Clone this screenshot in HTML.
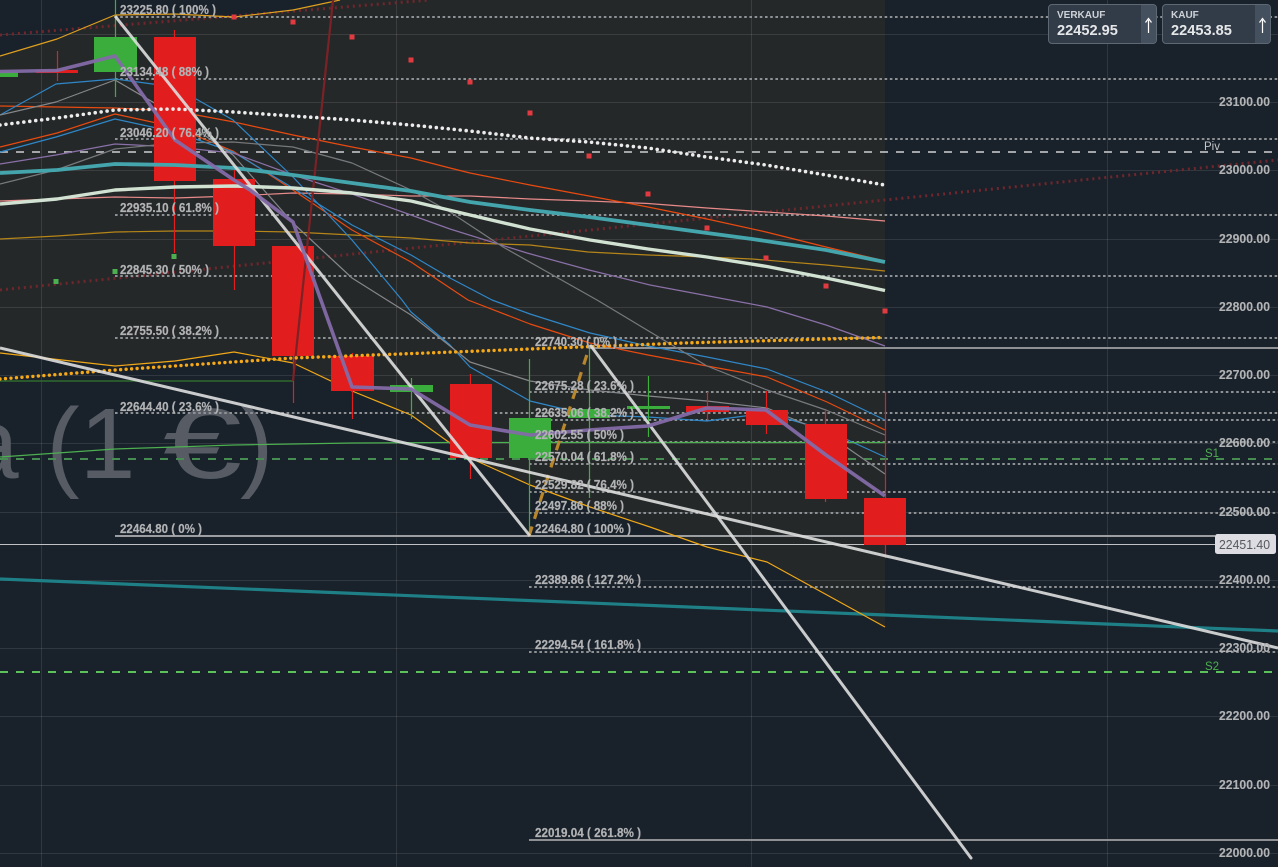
<!DOCTYPE html>
<html><head><meta charset="utf-8"><title>Chart</title>
<style>
html,body{margin:0;padding:0;background:#19212a;width:1278px;height:867px;overflow:hidden}
svg{display:block;position:absolute;left:0;top:0}
svg.main{filter:blur(.35px)}
text{font-family:"Liberation Sans",sans-serif}
.l{font-size:12.5px;font-weight:700;fill:#b2b3b5;stroke:#b2b3b5;stroke-width:.2}
.a{font-size:12.5px;font-weight:700;fill:#b2b3b5;stroke:#b2b3b5;stroke-width:.1}
.d{fill:none;stroke:#8e9194;stroke-width:2;stroke-dasharray:2.6 2.6}
.t{fill:none;stroke-width:1.2;stroke-linejoin:round}
.box{position:absolute;top:4px;width:107px;height:38px;background:#323c49;border:1px solid #5d6875;border-radius:4px;overflow:hidden;font-family:"Liberation Sans",sans-serif}
.box .s{position:absolute;right:0;top:0;width:15px;height:100%;background:#45505e}
.box .n{position:absolute;left:8px;top:5px;font-size:10px;font-weight:700;color:#cfd2d6;line-height:11px}
.box .v{position:absolute;left:8px;top:18px;font-size:14.6px;font-weight:700;color:#e6e7e9;line-height:17px}
.box svg{left:auto;right:0;top:0}
</style></head><body>
<svg class="main" width="1278" height="867" viewBox="0 0 1278 867" xmlns="http://www.w3.org/2000/svg">
<rect x="-5" y="-5" width="1288" height="877" fill="#19212a"/>
<polygon fill="#252829" points="0,56 57,39 115,15 175,14 234,17 293,10 340,0 885,0 885,627 826,595 767,562 707,547 650,527 590,507 530,485 470,458 450,443 411,415 352,391 293,363 234,352 175,361 115,366 0,353"/>
<g stroke="#fff" stroke-opacity=".1" stroke-width="1" fill="none">
<path d="M0 34.5H1278M0 102.5H1278M0 170.5H1278M0 239.5H1278M0 307.5H1278M0 375.5H1278M0 443.5H1278M0 512.5H1278M0 580.5H1278M0 648.5H1278M0 716.5H1278M0 785.5H1278M0 853.5H1278"/>
<path d="M41.5 0V867M396.5 0V867M751.5 0V867M1107.5 0V867"/>
</g>
<g font-size="100" fill="#575c64">
<text x="-37" y="478">a (1</text>
<text x="163" y="478" textLength="79" lengthAdjust="spacingAndGlyphs">€</text>
<text x="240" y="478">)</text>
</g>
<g fill="none" stroke="#6f262c" stroke-width="3" stroke-dasharray="2 4">
<path d="M0 35L430 0"/>
<path d="M0 290L1278 160"/>
</g>
<path class="d" d="M115 17H1278M115 79H1278M115 139H1278M115 215H1278M115 276H1278M115 338H1278M115 413H1278"/>
<path class="d" d="M529 392H1278M529 420H1278M529 442H1278M529 464H1278M529 492H1278M529 513H1278M529 587H1278M529 652H1278"/>
<path fill="none" stroke="#8e9094" stroke-width="2" d="M590 348H1278M529 840H1278"/>
<path fill="none" stroke="#9c9ea2" stroke-width="2" d="M115 536H1215"/>
<path fill="none" stroke="#a3a5a8" stroke-width="2" stroke-dasharray="8 8" d="M0 152H1278"/>
<path fill="none" stroke="#478c50" stroke-width="2" stroke-dasharray="8 8" d="M0 459H1278"/>
<path fill="none" stroke="#5cc05c" stroke-width="2" stroke-dasharray="8 8" d="M0 672H1278"/>
<path fill="none" stroke="#c0c2c4" stroke-width="1" d="M0 544.5H1215"/>
<path fill="none" stroke="#1e7f86" stroke-width="3.2" d="M0 579L1278 631"/>
<polyline class="t" stroke="#e0a020" points="0,56 57,39 115,15 175,14 234,17 293,10 340,0"/>
<polyline class="t" stroke="#f0a818" points="0,353 115,366 175,361 234,352 293,363 352,391 411,415 450,443 470,458 530,485 590,507 650,527 707,547 767,562 827,595 885,627"/>
<polyline class="t" stroke="#b58518" points="0,239 57,236 115,232 175,231 234,231 293,232 352,235 411,238 470,243 530,245 588,252 648,255 707,257 752,259 826,265 885,271"/>
<polyline class="t" stroke="#e88a8a" stroke-width="1.4" points="0,201 115,197 175,198 234,196 293,193 352,194 411,196 470,196 530,199 589,201 648,203.5 707,208 752,211 826,216 885,221"/>
<polyline class="t" stroke="#e84a10" points="0,106 57,107 115,108 175,111 234,122 293,135 352,147 411,158 450,168 470,173 530,185 589,196 648,207 707,219 766,232 826,247 885,261"/>
<polyline class="t" stroke="#e84a10" points="0,147 57,133 115,114 175,127 233,151 293,190 352,230 411,262 468,300 530,324 590,343 648,355 707,366 767,377 827,402 885,430"/>
<polyline class="t" stroke="#2f87c8" points="0,115 56,84 115,79 175,87 233,120 293,177 352,240 402,300 411,312 450,345 470,367 530,401 568,410 590,415 648,417 707,421 767,413 826,430 885,457"/>
<polyline class="t" stroke="#2f87c8" points="0,152 56,137 115,119 175,132 233,152 293,188 352,225 411,255 450,278 492,300 530,314 590,333 648,346 707,357 767,369 827,392 885,420"/>
<polyline class="t" stroke="#8a70a8" points="0,164 56,155 115,144 175,147 233,153 293,175 352,194 411,215 450,229 527,253 589,270 650,285 730,300 767,307 826,325 885,346"/>
<polyline class="t" stroke="#85878a" points="0,115 56,102 115,80 175,115 233,155 293,223 352,278 387,300 411,315 450,346 470,362 530,381 590,390 648,396 707,401 767,408 826,433 885,474"/>
<polyline class="t" stroke="#77797c" points="0,184 56,170 115,149 175,143 233,142 293,147 352,163 411,190 450,212 503,247 597,300 707,366 767,390 826,410 885,435"/>
<path fill="none" stroke="#2d6a2d" stroke-width="1.6" d="M0 381H293"/>
<polyline class="t" stroke="#4caf50" stroke-width="1.3" points="0,457 115,449 175,447 234,445 293,444 352,443 450,442.5 885,442.5"/>
<g stroke-width="1.2" fill="none">
<path stroke="#3fae3f" d="M115.5 0V97M411.5 378V419M529.5 359V536M589.5 347V498M648.5 376V437"/>
<path stroke="#e31e1e" d="M57.5 51V81M174.5 30V253M234.5 170V290M293.5 340V403M352.5 353V419M470.5 374V479M707.5 392V420M766.5 391V434M825.5 410V502M885.5 392V558"/>
</g>
<g fill="#3aad3c">
<rect x="0" y="72" width="18" height="5"/>
<rect x="94" y="37" width="43" height="35"/>
<rect x="390" y="385" width="43" height="7"/>
<rect x="509" y="418" width="42" height="40"/>
<rect x="568" y="409" width="42" height="9"/>
<rect x="627" y="406" width="43" height="3"/>
</g>
<g fill="#e11d1e">
<rect x="36" y="70" width="42" height="3"/>
<rect x="154" y="37" width="42" height="144"/>
<rect x="213" y="179" width="42" height="67"/>
<rect x="272" y="246" width="42" height="110"/>
<rect x="331" y="356" width="43" height="35"/>
<rect x="450" y="384" width="42" height="74"/>
<rect x="686" y="406" width="43" height="6"/>
<rect x="746" y="410" width="42" height="15"/>
<rect x="805" y="424" width="42" height="75"/>
<rect x="864" y="498" width="42" height="47"/>
</g>
<path fill="none" stroke="#d0d2d4" stroke-opacity=".6" stroke-width="1.8" d="M864 536H906"/>
<g fill="#e23a40">
<rect x="231.5" y="14.5" width="5" height="5"/><rect x="290.5" y="19.5" width="5" height="5"/><rect x="349.5" y="34.5" width="5" height="5"/><rect x="408.5" y="57.5" width="5" height="5"/><rect x="467.5" y="79.5" width="5" height="5"/><rect x="527.5" y="110.5" width="5" height="5"/><rect x="586.5" y="153.5" width="5" height="5"/><rect x="645.5" y="191.5" width="5" height="5"/><rect x="704.5" y="225.5" width="5" height="5"/><rect x="763.5" y="255.5" width="5" height="5"/><rect x="823.5" y="283.5" width="5" height="5"/><rect x="882.5" y="308.5" width="5" height="5"/>
</g>
<g fill="#4caf50">
<rect x="53.5" y="279" width="5" height="5"/><rect x="112.5" y="269" width="5" height="5"/><rect x="171.5" y="254" width="5" height="5"/>
</g>
<path fill="none" stroke="#7b2226" stroke-width="2.2" d="M293 381L333 0"/>
<polyline fill="none" stroke="#44a5ad" stroke-width="3.8" stroke-linejoin="round" points="0,173 57,170 115,164 175,165 234,168 293,175 352,183 411,191 470,202 530,210 589,217 648,225 707,233 752,239 826,250 885,262"/>
<polyline fill="none" stroke="#d2e2d2" stroke-width="3.4" stroke-linejoin="round" points="0,204 57,199 115,190 175,187 234,186 293,188 352,193 411,201 470,215 530,229 590,240 648,249 707,257 767,266.5 826,278 885,290.5"/>
<g fill="none" stroke-linecap="round">
<polyline stroke="#ececec" stroke-width="3.6" stroke-dasharray="0 6" points="0,125 57,118 115,110 175,109 234,112 293,116 352,120 411,125 470,131 530,138 589,142 648,148 707,157 766,165 826,175 885,185"/>
<polyline stroke="#f5a818" stroke-width="3.4" stroke-dasharray="0 5.5" points="0,379 115,370 233,362 293,358 453,352 683,343 882,337.5"/>
</g>
<path fill="none" stroke="#b8862b" stroke-width="3.2" stroke-dasharray="10 8" d="M529 536L590 345"/>
<g fill="none" stroke="#dedede" stroke-opacity=".9" stroke-width="3">
<path d="M115 16L530 536"/>
<path d="M591 346L971 858" stroke-linecap="round"/>
<path d="M0 348L1278 648"/>
</g>
<polyline fill="none" stroke="#836aa6" stroke-width="3.6" stroke-linejoin="round" stroke-opacity=".95" points="0,71.5 57,70.5 115,56 175,140 234,180 250,190 293,222 352,387 411,389 470,425 530,435 589,430 648,426 707,408 766,410 826,455 885,496"/>
<g>
<text class="l" x="120" y="14" textLength="96" lengthAdjust="spacingAndGlyphs">23225.80 ( 100% )</text>
<text class="l" x="120" y="76" textLength="89" lengthAdjust="spacingAndGlyphs">23134.48 ( 88% )</text>
<text class="l" x="120" y="137" textLength="99" lengthAdjust="spacingAndGlyphs">23046.20 ( 76.4% )</text>
<text class="l" x="120" y="212" textLength="99" lengthAdjust="spacingAndGlyphs">22935.10 ( 61.8% )</text>
<text class="l" x="120" y="274" textLength="89" lengthAdjust="spacingAndGlyphs">22845.30 ( 50% )</text>
<text class="l" x="120" y="335" textLength="99" lengthAdjust="spacingAndGlyphs">22755.50 ( 38.2% )</text>
<text class="l" x="120" y="411" textLength="99" lengthAdjust="spacingAndGlyphs">22644.40 ( 23.6% )</text>
<text class="l" x="120" y="533" textLength="82" lengthAdjust="spacingAndGlyphs">22464.80 ( 0% )</text>
<text class="l" x="535" y="346" textLength="82" lengthAdjust="spacingAndGlyphs">22740.30 ( 0% )</text>
<text class="l" x="535" y="390" textLength="99" lengthAdjust="spacingAndGlyphs">22675.28 ( 23.6% )</text>
<text class="l" x="535" y="417" textLength="99" lengthAdjust="spacingAndGlyphs">22635.06 ( 38.2% )</text>
<text class="l" x="535" y="439" textLength="89" lengthAdjust="spacingAndGlyphs">22602.55 ( 50% )</text>
<text class="l" x="535" y="461" textLength="99" lengthAdjust="spacingAndGlyphs">22570.04 ( 61.8% )</text>
<text class="l" x="535" y="489" textLength="99" lengthAdjust="spacingAndGlyphs">22529.82 ( 76.4% )</text>
<text class="l" x="535" y="510" textLength="89" lengthAdjust="spacingAndGlyphs">22497.86 ( 88% )</text>
<text class="l" x="535" y="533" textLength="96" lengthAdjust="spacingAndGlyphs">22464.80 ( 100% )</text>
<text class="l" x="535" y="584" textLength="106" lengthAdjust="spacingAndGlyphs">22389.86 ( 127.2% )</text>
<text class="l" x="535" y="649" textLength="106" lengthAdjust="spacingAndGlyphs">22294.54 ( 161.8% )</text>
<text class="l" x="535" y="837" textLength="106" lengthAdjust="spacingAndGlyphs">22019.04 ( 261.8% )</text>
<text class="a" x="1219" y="106" textLength="51" lengthAdjust="spacingAndGlyphs">23100.00</text>
<text class="a" x="1219" y="174" textLength="51" lengthAdjust="spacingAndGlyphs">23000.00</text>
<text class="a" x="1219" y="243" textLength="51" lengthAdjust="spacingAndGlyphs">22900.00</text>
<text class="a" x="1219" y="311" textLength="51" lengthAdjust="spacingAndGlyphs">22800.00</text>
<text class="a" x="1219" y="379" textLength="51" lengthAdjust="spacingAndGlyphs">22700.00</text>
<text class="a" x="1219" y="447" textLength="51" lengthAdjust="spacingAndGlyphs">22600.00</text>
<text class="a" x="1219" y="516" textLength="51" lengthAdjust="spacingAndGlyphs">22500.00</text>
<text class="a" x="1219" y="584" textLength="51" lengthAdjust="spacingAndGlyphs">22400.00</text>
<text class="a" x="1219" y="652" textLength="51" lengthAdjust="spacingAndGlyphs">22300.00</text>
<text class="a" x="1219" y="720" textLength="51" lengthAdjust="spacingAndGlyphs">22200.00</text>
<text class="a" x="1219" y="789" textLength="51" lengthAdjust="spacingAndGlyphs">22100.00</text>
<text class="a" x="1219" y="857" textLength="51" lengthAdjust="spacingAndGlyphs">22000.00</text>
<text x="1204" y="150" font-size="11.5" fill="#c4c6c8">Piv</text>
<text x="1205" y="457" font-size="11.5" fill="#4caf50">S1</text>
<text x="1205" y="670" font-size="11.5" fill="#4caf50">S2</text>
</g>
<rect x="1215" y="534" width="61" height="20" rx="2.5" fill="#dcdce2"/>
<text x="1219" y="549" font-size="12.5" fill="#55585d" textLength="51" lengthAdjust="spacingAndGlyphs">22451.40</text>
</svg>
<div class="box" style="left:1048px"><div class="s"></div><div class="n">VERKAUF</div><div class="v">22452.95</div>
<svg width="15" height="38" viewBox="0 0 15 38"><path d="M7.5 28V15" fill="none" stroke="#fff" stroke-width="1.2"/><path d="M4.5 17.5L7.5 13.5L10.5 17.5" fill="none" stroke="#fff" stroke-width="1.2"/></svg></div>
<div class="box" style="left:1162px"><div class="s"></div><div class="n">KAUF</div><div class="v">22453.85</div>
<svg width="15" height="38" viewBox="0 0 15 38"><path d="M7.5 28V15" fill="none" stroke="#fff" stroke-width="1.2"/><path d="M4.5 17.5L7.5 13.5L10.5 17.5" fill="none" stroke="#fff" stroke-width="1.2"/></svg></div>
</body></html>
